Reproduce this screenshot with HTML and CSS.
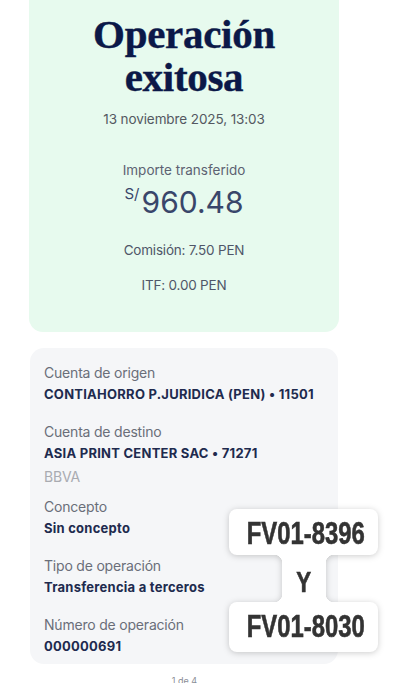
FILE: index.html
```html
<!DOCTYPE html>
<html lang="es">
  <head>
    <meta charset="UTF-8" />
    <meta name="viewport" content="width=device-width, initial-scale=1.0" />
    <title>Operación exitosa</title>
    <link rel="stylesheet" href="styles.css">
  </head>
  <body>
    <div class="receipt">
      <section class="summary">
        <h1 class="summary__title">Operación<br />exitosa</h1>
        <p class="summary__date">13 noviembre 2025, 13:03</p>
        <p class="summary__label">Importe transferido</p>
        <p class="summary__amount">
          <span class="summary__currency">S/</span>960.48
        </p>
        <p class="summary__fee">Comisión: 7.50 PEN</p>
        <p class="summary__fee">ITF: 0.00 PEN</p>
      </section>

      <section class="details">
        <div class="details__item">
          <span class="details__label">Cuenta de origen</span>
          <span class="details__value">CONTIAHORRO P.JURIDICA (PEN) • 11501</span>
        </div>
        <div class="details__item">
          <span class="details__label">Cuenta de destino</span>
          <span class="details__value">ASIA PRINT CENTER SAC • 71271</span>
          <span class="details__bank">BBVA</span>
        </div>
        <div class="details__item">
          <span class="details__label">Concepto</span>
          <span class="details__value">Sin concepto</span>
        </div>
        <div class="details__item">
          <span class="details__label">Tipo de operación</span>
          <span class="details__value">Transferencia a terceros</span>
        </div>
        <div class="details__item">
          <span class="details__label">Número de operación</span>
          <span class="details__value">000000691</span>
        </div>
      </section>

      <p class="pager">1 de 4</p>

      <div class="sticker">
        <div class="sticker__box"><span class="sticker__text">FV01-8396</span></div>
        <div class="sticker__neck"><span class="sticker__text">Y</span></div>
        <div class="sticker__box sticker__box--last"><span class="sticker__text">FV01-8030</span></div>
      </div>
    </div>
  </body>
</html>
```

FILE: styles.css
```css
* {
  box-sizing: border-box;
}

body {
  margin: 0;
  background-color: #ffffff;
  font-family: Inter, "Noto Sans", sans-serif;
  overflow: hidden;
}

p,
h1 {
  margin: 0;
}

.receipt {
  position: relative;
  display: flow-root;
  width: 406px;
  height: 683px;
  padding-left: 29px;
}

/* green summary card */

.summary {
  display: flex;
  flex-direction: column;
  align-items: center;
  width: 310px;
  height: 352px;
  margin-top: -20px;
  padding-top: 33px;
  border-radius: 14px;
  background-color: #e7faee;
  text-align: center;
}

.summary__title {
  font-family: "Liberation Serif", serif;
  font-size: 41px;
  font-weight: 700;
  line-height: 43px;
  color: #0b1848;
  letter-spacing: -0.3px;
  -webkit-text-stroke: 0.4px #0b1848;
}

.summary__date {
  margin-top: 12px;
  font-size: 13.5px;
  letter-spacing: -0.1px;
  color: #545861;
}

.summary__label {
  margin-top: 35px;
  font-size: 13.5px;
  color: #5d6272;
}

.summary__amount {
  display: flex;
  align-items: flex-start;
  margin-top: 6px;
  font-size: 30px;
  line-height: 36px;
  color: #39466a;
}

.summary__currency {
  margin-top: 2px;
  margin-right: 2px;
  font-size: 15px;
  line-height: 15px;
}

.summary__fee {
  margin-top: 22px;
  font-size: 13.5px;
  letter-spacing: -0.2px;
  color: #4f5668;
}

.summary__fee + .summary__fee {
  margin-top: 19px;
}

/* grey details card */

.details {
  display: flex;
  flex-direction: column;
  gap: 16px;
  width: 308px;
  margin-top: 16px;
  margin-left: 1px;
  padding: 14px 14px 7px;
  border-radius: 14px;
  background-color: #f5f6f8;
}

.details__item {
  display: flex;
  flex-direction: column;
}

.details__label,
.details__bank {
  font-size: 14px;
  line-height: 22px;
  color: #6a6e79;
  letter-spacing: -0.2px;
}

.details__bank {
  margin: 5px 0 -5px;
  line-height: 16px;
  color: #a9abb1;
}

.details__value {
  font-size: 13px;
  font-weight: 700;
  line-height: 21px;
  color: #202a4e;
  letter-spacing: 0.25px;
  white-space: nowrap;
}

.pager {
  margin-top: 11px;
  padding-right: 66px;
  font-size: 9px;
  text-align: center;
  color: #8a8d95;
}

/* invoice sticker over the card */

.sticker {
  position: absolute;
  top: 509px;
  left: 229px;
  display: flex;
  flex-direction: column;
  align-items: center;
  width: 149px;
  filter: drop-shadow(0 1px 3px rgba(0, 0, 0, 0.2));
  font-family: "Liberation Sans", Arial, sans-serif;
  font-weight: 700;
  color: #333333;
  -webkit-text-stroke: 0.6px #333333;
}

.sticker__box {
  width: 100%;
  height: 46px;
  padding-top: 2px;
  border-radius: 8px;
  background-color: #ffffff;
  font-size: 31px;
  line-height: 46px;
  text-align: center;
  white-space: nowrap;
}

.sticker__box--last {
  height: 50px;
}

.sticker__text {
  display: inline-block;
  transform: scaleX(0.77);
}

.sticker__neck {
  position: relative;
  width: 44px;
  height: 47px;
  padding-top: 4px;
  background-color: #ffffff;
  font-size: 29px;
  line-height: 47px;
  text-align: center;
}

.sticker__neck::before,
.sticker__neck::after {
  content: "";
  position: absolute;
  top: 0;
  width: 8px;
  height: 100%;
}

.sticker__neck::before {
  left: -8px;
  background:
    radial-gradient(circle at 0 100%, transparent 8px, #ffffff 8.5px) top / 8px 8px no-repeat,
    radial-gradient(circle at 0 0, transparent 8px, #ffffff 8.5px) bottom / 8px 8px no-repeat;
}

.sticker__neck::after {
  right: -8px;
  background:
    radial-gradient(circle at 100% 100%, transparent 8px, #ffffff 8.5px) top / 8px 8px no-repeat,
    radial-gradient(circle at 100% 0, transparent 8px, #ffffff 8.5px) bottom / 8px 8px no-repeat;
}
```
